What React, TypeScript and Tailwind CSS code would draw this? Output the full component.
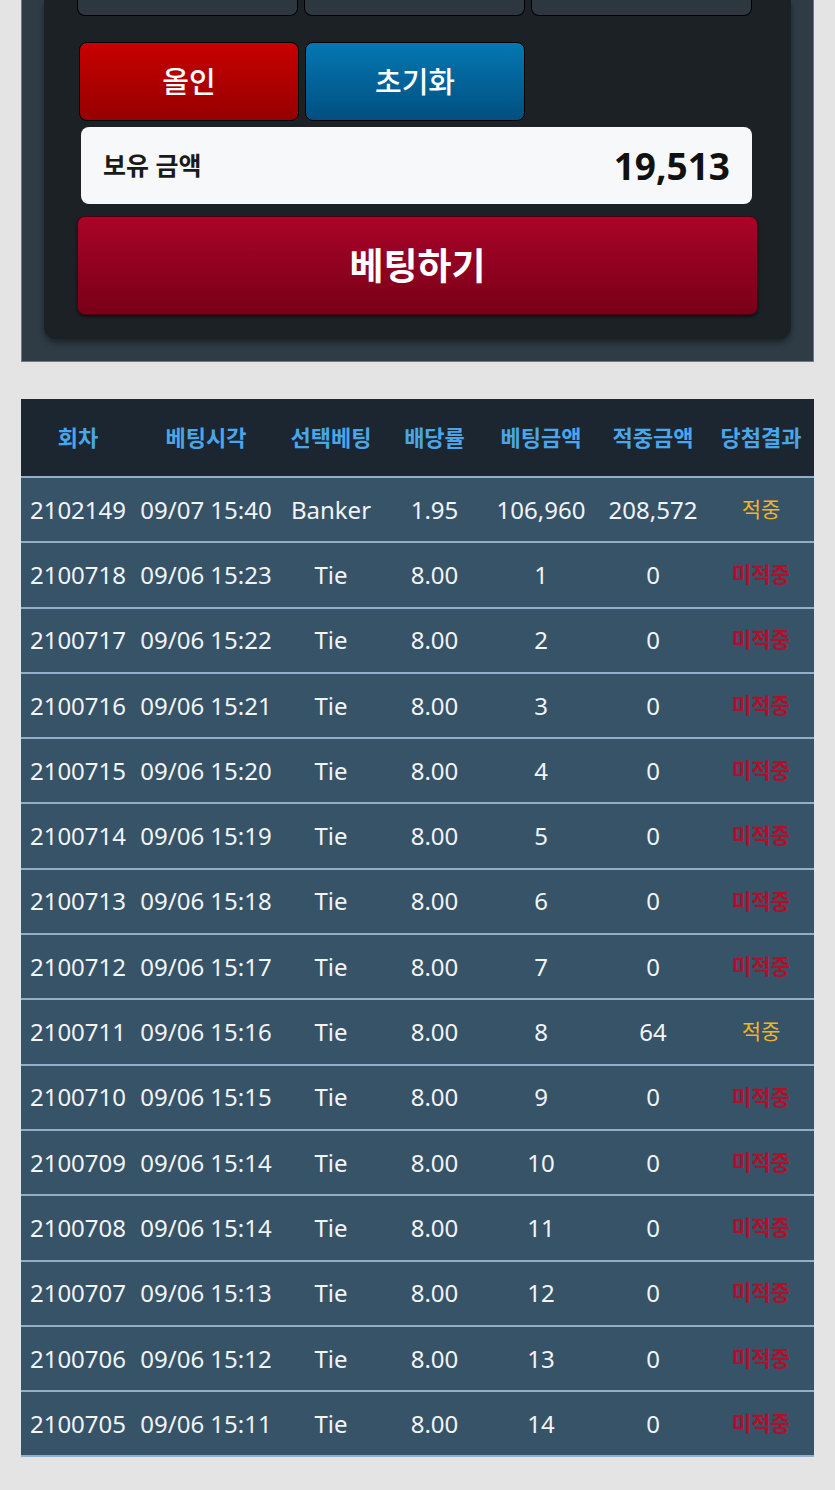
const rows: [string, string, string, string, string, string, boolean][] = [
  ["2102149", "09/07 15:40", "Banker", "1.95", "106,960", "208,572", true],
  ["2100718", "09/06 15:23", "Tie", "8.00", "1", "0", false],
  ["2100717", "09/06 15:22", "Tie", "8.00", "2", "0", false],
  ["2100716", "09/06 15:21", "Tie", "8.00", "3", "0", false],
  ["2100715", "09/06 15:20", "Tie", "8.00", "4", "0", false],
  ["2100714", "09/06 15:19", "Tie", "8.00", "5", "0", false],
  ["2100713", "09/06 15:18", "Tie", "8.00", "6", "0", false],
  ["2100712", "09/06 15:17", "Tie", "8.00", "7", "0", false],
  ["2100711", "09/06 15:16", "Tie", "8.00", "8", "64", true],
  ["2100710", "09/06 15:15", "Tie", "8.00", "9", "0", false],
  ["2100709", "09/06 15:14", "Tie", "8.00", "10", "0", false],
  ["2100708", "09/06 15:14", "Tie", "8.00", "11", "0", false],
  ["2100707", "09/06 15:13", "Tie", "8.00", "12", "0", false],
  ["2100706", "09/06 15:12", "Tie", "8.00", "13", "0", false],
  ["2100705", "09/06 15:11", "Tie", "8.00", "14", "0", false],
];

const headers = ["회차", "베팅시각", "선택베팅", "배당률", "베팅금액", "적중금액", "당첨결과"];
const widths = ["w-[114px]", "w-[142px]", "w-[108px]", "w-[99px]", "w-[114px]", "w-[110px]", "w-[106px]"];

export default function App() {
  return (
    <div
      className="min-h-[1490px] bg-[#e4e4e4] px-[21px]"
      style={{ fontFamily: '"Noto Sans", "Noto Sans CJK KR", sans-serif' }}
    >
      {/* betting panel */}
      <div className="bg-[#2f3c46] border-l border-r border-b border-[#6d7a85] px-[22px] pb-[22px]">
        <div className="bg-[#1c2125] rounded-b-xl shadow-[0_4px_6px_rgba(0,0,0,0.4)] px-[33px] pb-[24px]">
          <div className="grid grid-cols-3 gap-[6px] pr-[6px]">
            <div className="h-[16px] bg-[#2d3740] border border-black border-t-0 rounded-b-lg"></div>
            <div className="h-[16px] bg-[#2d3740] border border-black border-t-0 rounded-b-lg"></div>
            <div className="h-[16px] bg-[#2d3740] border border-black border-t-0 rounded-b-lg"></div>
          </div>
          <div className="flex gap-[6px] mt-[26px] pl-[2px]">
            <button className="w-[220px] h-[79px] rounded-lg border border-black bg-gradient-to-b from-[#c80000] to-[#960000] text-white text-[29px] font-medium">
              올인
            </button>
            <button className="w-[220px] h-[79px] rounded-lg border border-black bg-gradient-to-b from-[#0478b2] to-[#024f80] text-white text-[29px] font-medium">
              초기화
            </button>
          </div>
          <div className="mt-[6px] ml-[4px] mr-[6px] h-[77px] bg-[#f7f8f9] rounded-lg flex items-center justify-between px-[22px]">
            <span className="text-[25px] font-bold text-[#1a1a1a]">보유 금액</span>
            <span className="text-[37px] font-bold text-[#111]">19,513</span>
          </div>
          <button className="mt-[12px] w-full h-[99px] rounded-lg border border-[#4a0010] bg-gradient-to-b from-[#aa0428] to-[#780018] text-white text-[37px] font-bold shadow-[0_2px_3px_rgba(0,0,0,0.5)]">
            베팅하기
          </button>
        </div>
      </div>

      {/* history table */}
      <table className="mt-[37px] w-[793px] border-collapse table-fixed">
        <thead>
          <tr className="bg-[#1b2630] h-[78px] border-b-2 border-[#8fb0c8]">
            {headers.map((h, i) => (
              <th key={h} className={`${widths[i]} text-[22px] font-bold text-[#4aa6e8] text-center whitespace-nowrap`}>
                {h}
              </th>
            ))}
          </tr>
        </thead>
        <tbody>
          {rows.map((r) => (
            <tr key={r[0]} className="bg-[#365368] h-[65.3px] border-b-2 border-[#8fb0c8] text-[#f2f4f6] text-[24px] text-center">
              <td className="whitespace-nowrap">{r[0]}</td>
              <td className="whitespace-nowrap">{r[1]}</td>
              <td>{r[2]}</td>
              <td>{r[3]}</td>
              <td>{r[4]}</td>
              <td>{r[5]}</td>
              <td className={r[6] ? "text-[#f0b428] text-[21px]" : "text-[#b0102a] text-[21px] font-bold"}>
                {r[6] ? "적중" : "미적중"}
              </td>
            </tr>
          ))}
        </tbody>
      </table>
    </div>
  );
}
